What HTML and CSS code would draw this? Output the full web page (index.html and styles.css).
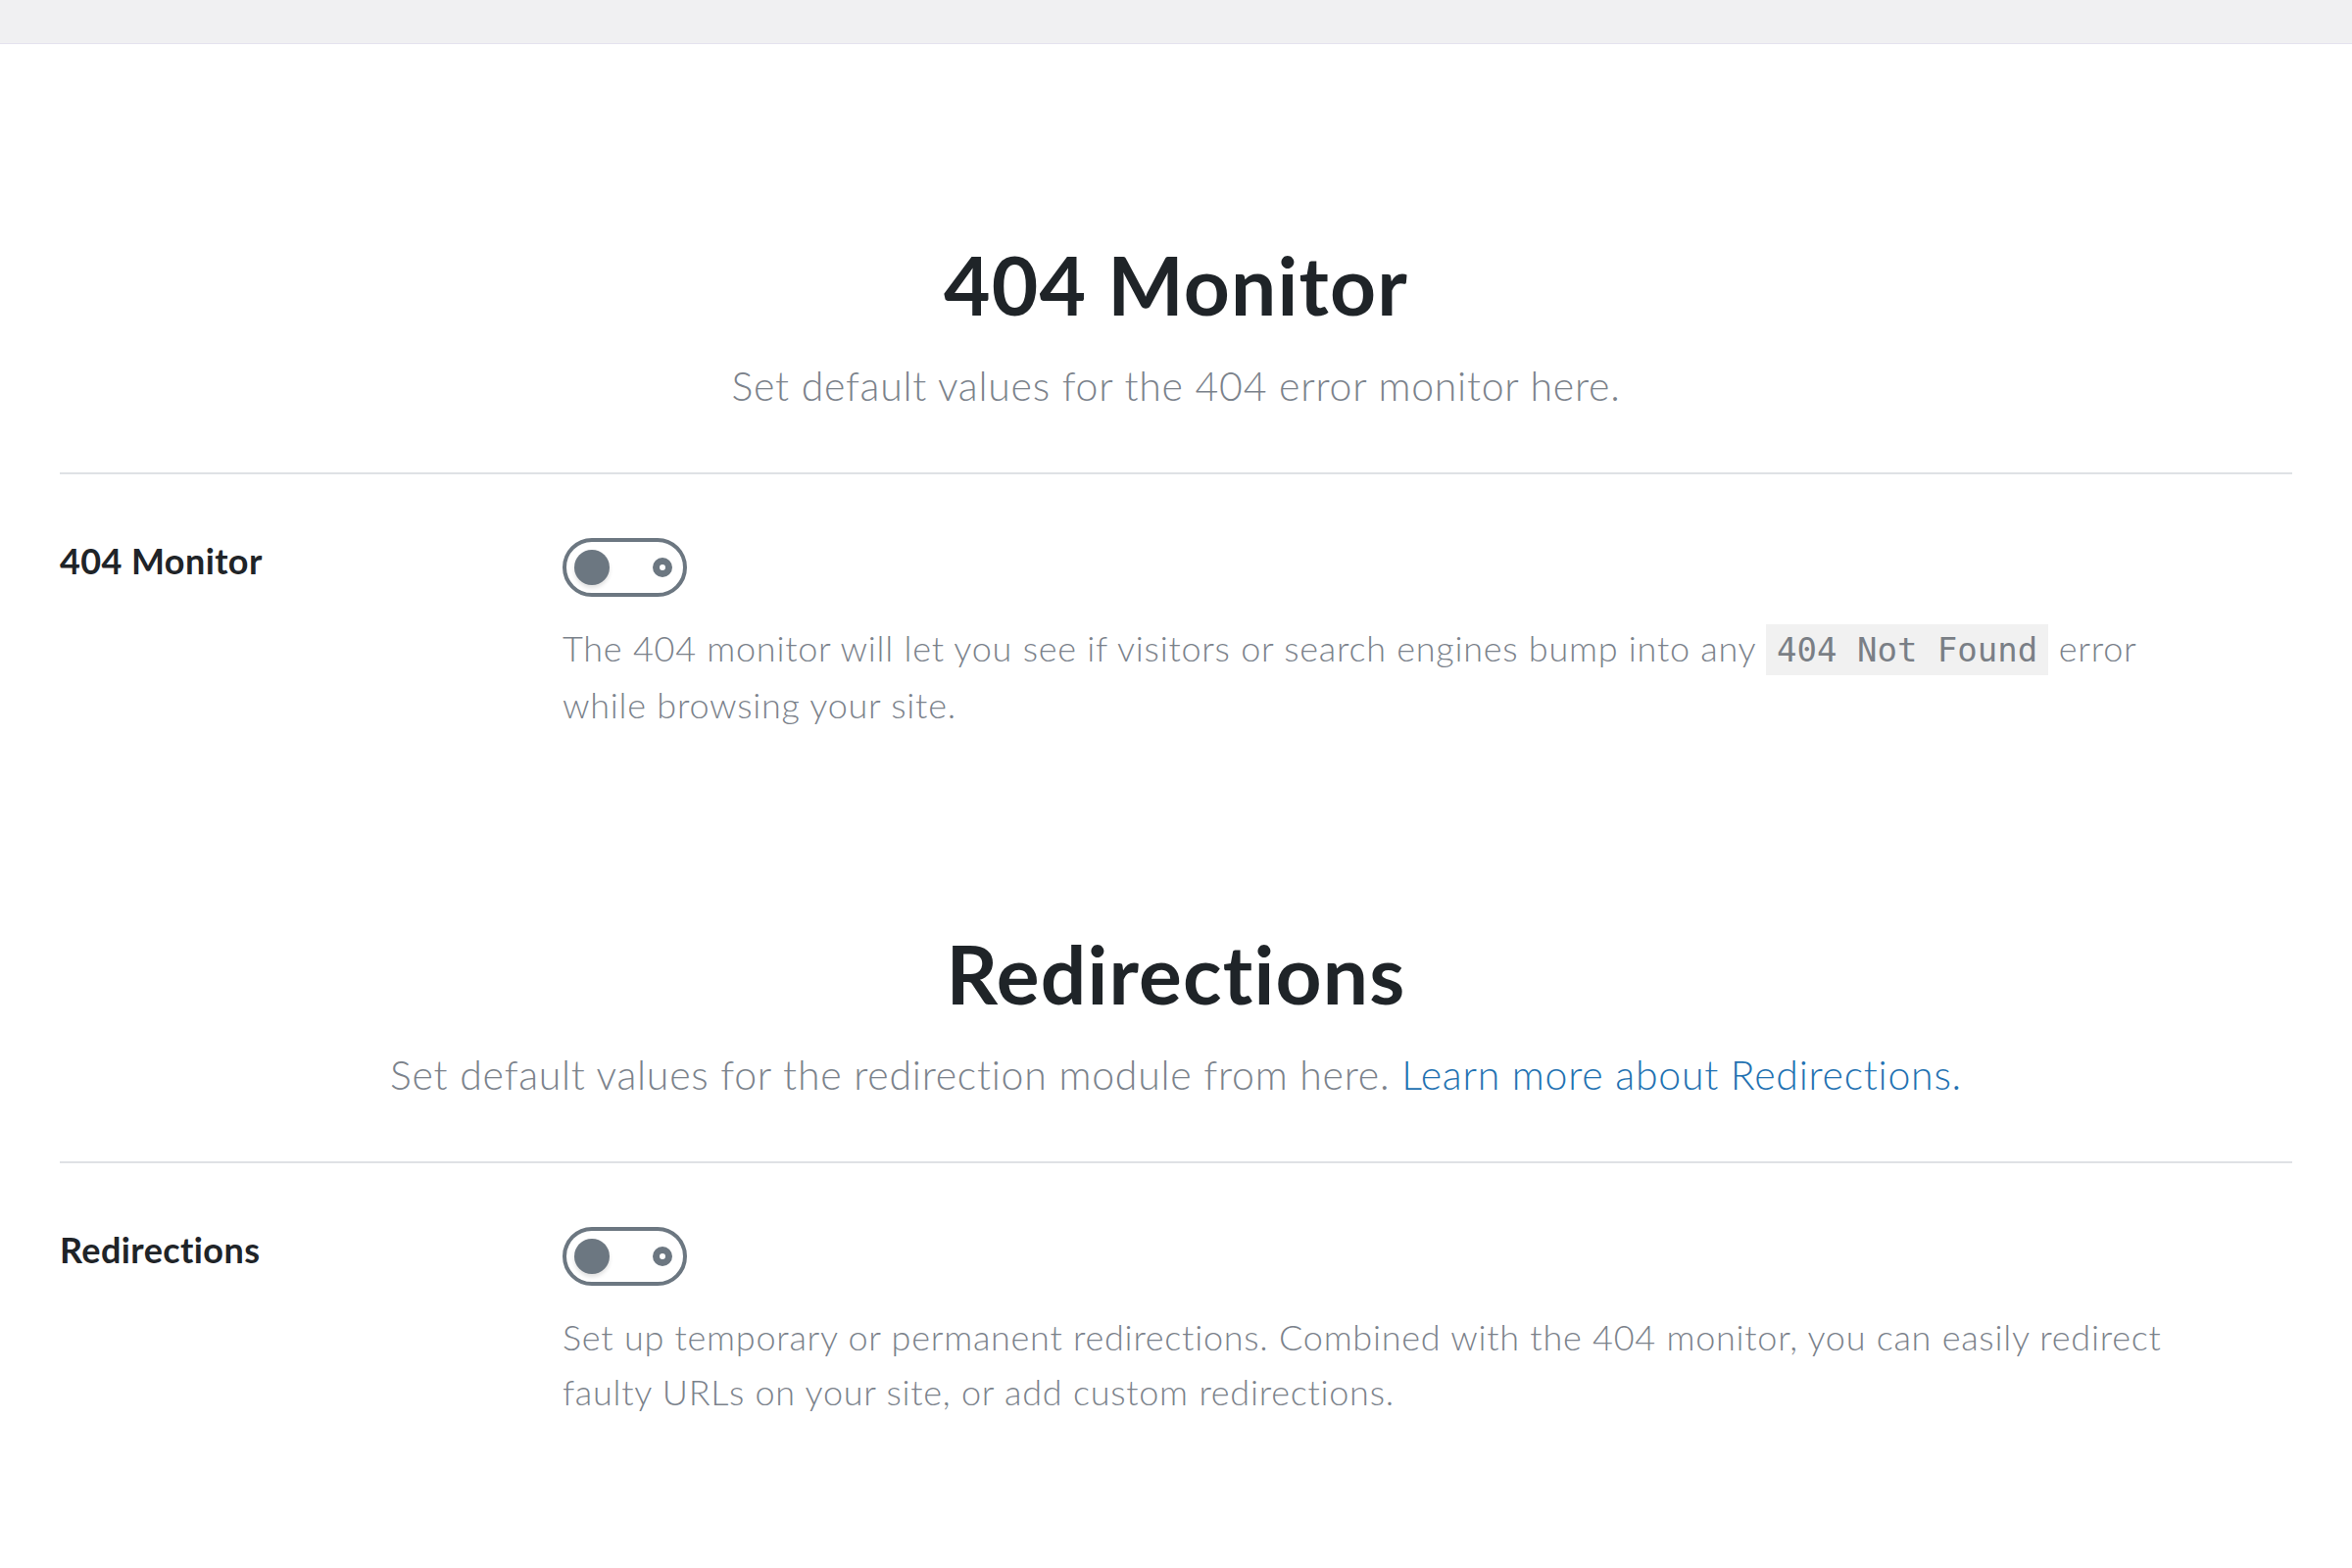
FILE: index.html
```html
<!DOCTYPE html>
<html lang="en">
<head>
<meta charset="utf-8">
<title>Modules – 404 Monitor &amp; Redirections</title>
<link rel="stylesheet" href="styles.css">
</head>
<body>
  <div class="topbar"></div>

  <main class="content">
    <section class="module">
      <header class="module-head">
        <h2 class="module-title">404 Monitor</h2>
        <p class="module-intro">Set default values for the 404 error monitor here.</p>
      </header>
      <div class="field">
        <div class="field-label">404 Monitor</div>
        <div class="field-body">
          <span class="switch" role="switch" aria-checked="false"><span class="switch-knob"></span><span class="switch-off"></span></span>
          <p class="field-desc">The 404 monitor will let you see if visitors or search engines bump into any <code>404 Not Found</code> error while browsing your site.</p>
        </div>
      </div>
    </section>

    <section class="module">
      <header class="module-head">
        <h2 class="module-title">Redirections</h2>
        <p class="module-intro">Set default values for the redirection module from here. <a href="#">Learn more about Redirections.</a></p>
      </header>
      <div class="field">
        <div class="field-label">Redirections</div>
        <div class="field-body">
          <span class="switch" role="switch" aria-checked="false"><span class="switch-knob"></span><span class="switch-off"></span></span>
          <p class="field-desc">Set up temporary or permanent redirections. Combined with the 404 monitor, you can easily redirect faulty URLs on your site, or add custom redirections.</p>
        </div>
      </div>
    </section>
  </main>
</body>
</html>
```

FILE: styles.css
```css
* { box-sizing: border-box; }

html, body {
  margin: 0;
  background: #ffffff;
}

body {
  font-family: "Lato", "Noto Sans", sans-serif;
  color: #23282d;
}

.topbar {
  height: 45px;
  background: #f0f0f2;
  border-bottom: 1px solid #e4e2ee;
}

.content {
  padding: 0 61px;
}

.module {
  padding-top: 197px;
}

.module + .module {
  padding-top: 198px;
}

.module-head {
  text-align: center;
  padding-bottom: 62px;
  border-bottom: 2px solid #dfe1e5;
}

.module-title {
  margin: 0;
  font-size: 82px;
  line-height: 96px;
  font-weight: 700;
  letter-spacing: 1.2px;
  color: #1f2428;
}

.module-intro {
  margin: 30px 0 0;
  font-size: 41px;
  line-height: 52px;
  font-weight: 300;
  letter-spacing: 0.75px;
  color: #7b828b;
}

.module-intro a {
  color: #2271b1;
  text-decoration: none;
}

.field {
  display: flex;
  padding-top: 66px;
}

.field-label {
  width: 513px;
  flex: none;
  font-size: 36px;
  font-weight: 700;
  line-height: 44px;
  letter-spacing: 0.4px;
  color: #1f2428;
}

.field-body {
  flex: 1;
}

.switch {
  position: relative;
  display: block;
  width: 127px;
  height: 60px;
  border: 4px solid #6c7781;
  border-radius: 30px;
  margin-top: -1px;
}

.switch-knob {
  position: absolute;
  left: 8px;
  top: 8px;
  width: 36px;
  height: 36px;
  border-radius: 50%;
  background: #6c7781;
  box-shadow: 0 3px 4px rgba(0, 0, 0, 0.12);
}

.switch-off {
  position: absolute;
  right: 11px;
  top: 16px;
  width: 20px;
  height: 20px;
  border-radius: 50%;
  border: 7px solid #6c7781;
}

.field-desc {
  margin: 24px 0 0;
  max-width: 1700px;
  font-size: 36px;
  line-height: 56px;
  font-weight: 300;
  letter-spacing: 0.75px;
  color: #7b828b;
}

.field-desc code {
  font-family: "DejaVu Sans Mono", monospace;
  font-size: 34px;
  letter-spacing: 0;
  color: #7a7f86;
  background: #f1f1f1;
  padding: 6px 11px;
}
```
